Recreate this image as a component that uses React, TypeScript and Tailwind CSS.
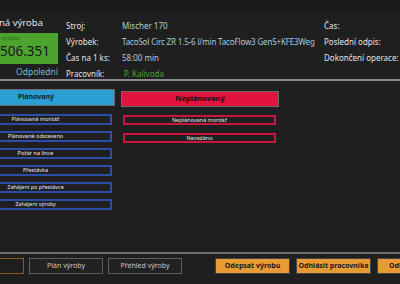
import React from "react";

const planned = [
  "Plánovaná montáž",
  "Plánované odstaveno",
  "Požár na lince",
  "Přestávka",
  "Zahájení po přestávce",
  "Zahájení výroby",
];

const unplanned = ["Neplánovaná montáž", "Nezadáno"];

export default function App() {
  return (
    <div
      className="w-[400px] h-[284px] overflow-hidden bg-[#1f1f1f] text-[#e0e0e0] flex flex-col"
      style={{ fontFamily: '"Noto Sans", "Open Sans", sans-serif' }}
    >
      <div className="h-[12px] bg-[#1a1a1a] shrink-0" />

      {/* header */}
      <div className="flex h-[67px] shrink-0">
        <div className="w-[58px] flex flex-col">
          <div className="h-[21px] text-[9.5px] leading-[21px] whitespace-nowrap -ml-[1px]">ná výroba</div>
          <div className="h-[32px] bg-[#4ca42e] flex flex-col pl-[1px]">
            <span className="text-[5px] leading-[8px] text-[#2d6b1a] mt-[1px]">výrobku</span>
            <span className="text-[13.5px] leading-[18px] text-[#161616] -ml-[1px]">506.351</span>
          </div>
          <div className="text-[8.5px] leading-[14px] text-[#7fb6d6] text-right mt-[1px]">Odpolední</div>
        </div>
        <div className="flex flex-col ml-[8px] w-[56px] text-[8px] leading-[16px] pt-[6px] text-[#e4e4e4] whitespace-nowrap">
          <span>Stroj:</span>
          <span>Výrobek:</span>
          <span>Čas na 1 ks:</span>
          <span>Pracovník:</span>
        </div>
        <div className="flex flex-col w-[202px] text-[8px] leading-[16px] pt-[6px] text-[#b9c9d6] whitespace-nowrap">
          <span>Mischer 170</span>
          <span className="text-[#a9c9dd] tracking-[-0.15px]">TacoSol Circ ZR 1.5-6 l/min TacoFlow3 GenS+KFE3Weg</span>
          <span>58:00 min</span>
          <span className="text-[#4ca42e] pl-[2px]">P. Kalivoda</span>
        </div>
        <div className="flex flex-col text-[8px] leading-[16px] pt-[6px] text-[#e4e4e4] whitespace-nowrap">
          <span>Čas:</span>
          <span>Poslední odpis:</span>
          <span>Dokončení operace:</span>
        </div>
      </div>

      <div className="h-[2px] bg-[#8a8a8a] shrink-0" />

      {/* columns */}
      <div className="flex gap-[6px] -ml-[43px] pt-[8px] flex-1">
        <div className="w-[158px] flex flex-col">
          <div className="h-[17px] bg-[#2a9fd6] border border-[#6a6a6a] flex items-center justify-center text-[7px] font-bold text-[#10222e]">
            Plánovaný
          </div>
          <div className="flex flex-col gap-[6px] pt-[8px] pl-[2px] pr-[3px]">
            {planned.map((p) => (
              <div
                key={p}
                className="h-[11px] border-2 border-[#2d4ea6] flex items-center justify-center text-[5.5px] text-[#e8e8e8] whitespace-nowrap"
              >
                {p}
              </div>
            ))}
          </div>
        </div>
        <div className="w-[158px] flex flex-col pt-[2px]">
          <div className="h-[16px] bg-[#e0143f] border border-[#6a6a6a] flex items-center justify-center text-[7.5px] font-bold text-[#1a0a0e]">
            Neplánovaný
          </div>
          <div className="flex flex-col gap-[8px] pt-[8px] pl-[2px] pr-[3px]">
            {unplanned.map((p) => (
              <div
                key={p}
                className="h-[10px] border-2 border-[#c8163f] flex items-center justify-center text-[5.5px] text-[#e8e8e8] whitespace-nowrap"
              >
                {p}
              </div>
            ))}
          </div>
        </div>
      </div>

      <div className="h-[2px] bg-[#6e6e6e] shrink-0" />

      {/* footer */}
      <div className="h-[30px] shrink-0 flex items-start pt-[4px] -ml-[50px]">
        <div className="flex gap-[5px]">
          <button className="w-[74px] h-[16px] border border-[#8a5a1e] bg-[#1f1f1f]" />
          <button className="w-[74px] h-[16px] border border-[#5e5e5e] bg-[#222] text-[7px] text-[#c8c8c8] whitespace-nowrap">
            Plán výroby
          </button>
          <button className="w-[74px] h-[16px] border border-[#5e5e5e] bg-[#222] text-[7px] text-[#c8c8c8] whitespace-nowrap">
            Přehled výroby
          </button>
        </div>
        <div className="flex gap-[6px] ml-[33px]">
          <button className="w-[75px] h-[16px] bg-[#e89b34] border border-[#444] text-[7px] font-bold text-[#1a1a1a] whitespace-nowrap">
            Odepsat výrobu
          </button>
          <button className="w-[75px] h-[16px] bg-[#e89b34] border border-[#444] text-[7px] font-bold text-[#1a1a1a] whitespace-nowrap">
            Odhlásit pracovníka
          </button>
          <button className="w-[75px] shrink-0 h-[16px] bg-[#e89b34] border border-[#444] text-[7px] font-bold text-[#1a1a1a] whitespace-nowrap text-left pl-[11px]">
            Odhlásit
          </button>
        </div>
      </div>
    </div>
  );
}
